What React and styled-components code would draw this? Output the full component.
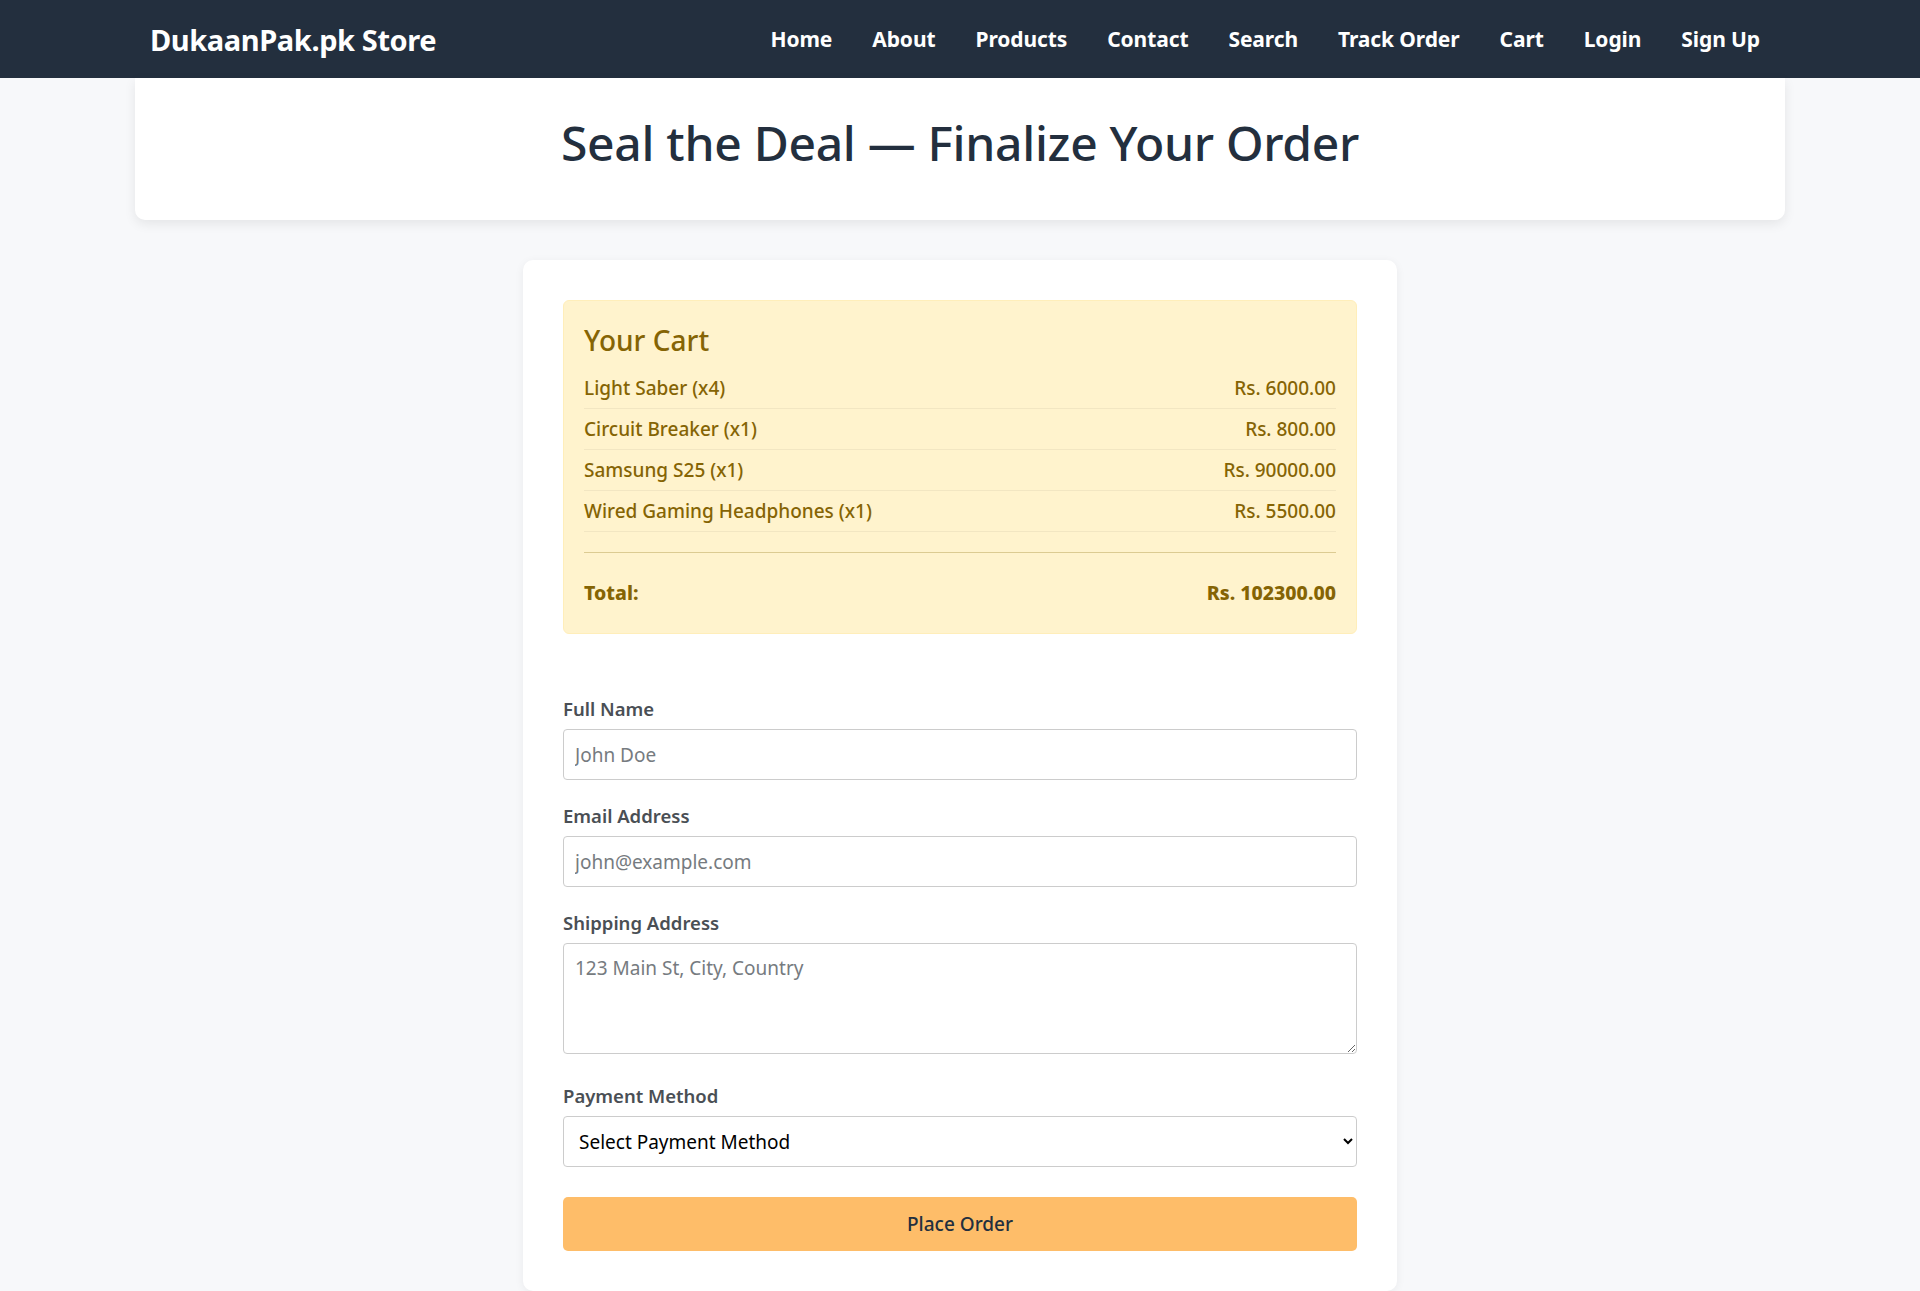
import React from 'react';
import styled, { createGlobalStyle } from 'styled-components';

const GlobalStyle = createGlobalStyle`
    * {
        box-sizing: border-box;
    }
    body {
        margin: 0;
        background: #f7f8fa;
        font-family: "Noto Sans", "Open Sans", Arial, sans-serif;
        color: #232f3e;
    }
`;

const Navbar = styled.nav`
    height: 78px;
    background: #232f3e;
    display: flex;
    align-items: center;
    justify-content: space-between;
    padding: 0 160px 0 150px;
`;

const Brand = styled.div`
    font-size: 29px;
    font-weight: 700;
    color: #ffffff;
    letter-spacing: -0.4px;
`;

const NavLinks = styled.div`
    display: flex;
    gap: 40px;
`;

const NavLink = styled.a`
    font-size: 21px;
    font-weight: 700;
    color: #ffffff;
    text-decoration: none;
    letter-spacing: -0.1px;
    cursor: pointer;
`;

const HeaderCard = styled.header`
    width: 1650px;
    margin: 0 auto;
    height: 142px;
    padding-bottom: 14px;
    background: #ffffff;
    border-radius: 0 0 10px 10px;
    box-shadow: 0 4px 12px rgba(0, 0, 0, 0.08);
    display: flex;
    align-items: center;
    justify-content: center;
`;

const PageTitle = styled.h1`
    margin: 0;
    font-size: 48px;
    font-weight: 500;
    color: #232f3e;
    letter-spacing: -0.3px;
`;

const CheckoutCard = styled.section`
    width: 874px;
    margin: 40px auto 0;
    background: #ffffff;
    border-radius: 10px;
    box-shadow: 0 2px 10px rgba(0, 0, 0, 0.06);
    padding: 40px;
`;

const CartBox = styled.div`
    background: #fff3cd;
    border: 1px solid #ffeeba;
    border-radius: 6px;
    padding: 22px 20px 20px;
    color: #856404;
    margin-bottom: 63px;
`;

const CartTitle = styled.h3`
    margin: 0 0 10px;
    font-size: 28px;
    font-weight: 500;
    line-height: 1.25;
`;

const CartRow = styled.div`
    display: flex;
    justify-content: space-between;
    align-items: center;
    padding: 8px 0;
    font-size: ${({ $total }) => ($total ? 19.5 : 19)}px;
    font-weight: ${({ $total }) => ($total ? 800 : 500)};
    line-height: 24px;
    border-bottom: ${({ $total }) => ($total ? 'none' : '1px solid rgba(0, 0, 0, 0.05)')};
`;

const Divider = styled.hr`
    border: none;
    border-top: 1px solid #dccb92;
    margin: 20px 0 20px;
`;

const Field = styled.div`
    margin-bottom: ${({ $gap }) => $gap}px;
`;

const Label = styled.label`
    display: block;
    font-size: 18.5px;
    font-weight: 600;
    color: #4a4f55;
    line-height: 24px;
    margin-bottom: 8px;
`;

const inputBase = `
    display: block;
    width: 100%;
    border: 1px solid #cccccc;
    border-radius: 4px;
    background: #ffffff;
    font-family: "Noto Sans", "Open Sans", Arial, sans-serif;
    font-size: 19px;
    color: #232f3e;
    outline: none;
    &::placeholder {
        color: #767b80;
    }
`;

const TextInput = styled.input`
    ${inputBase}
    height: 51px;
    padding: 0 11px;
`;

const TextArea = styled.textarea`
    ${inputBase}
    height: 111px;
    padding: 11px 11px;
    resize: vertical;
`;

const Select = styled.select`
    ${inputBase}
    height: 51px;
    padding: 0 11px;
    color: #000000;
`;

const SubmitButton = styled.button`
    display: block;
    width: 100%;
    height: 54px;
    border: none;
    border-radius: 5px;
    background: #febd69;
    color: #232f3e;
    font-family: "Noto Sans", "Open Sans", Arial, sans-serif;
    font-size: 19px;
    font-weight: 500;
    cursor: pointer;
`;

const links = ['Home', 'About', 'Products', 'Contact', 'Search', 'Track Order', 'Cart', 'Login', 'Sign Up'];

const cartItems = [
    { name: 'Light Saber', qty: 4, price: 6000 },
    { name: 'Circuit Breaker', qty: 1, price: 800 },
    { name: 'Samsung S25', qty: 1, price: 90000 },
    { name: 'Wired Gaming Headphones', qty: 1, price: 5500 },
];

const App = () => {
    const total = cartItems.reduce((sum, item) => sum + item.price, 0);

    return (
        <>
            <GlobalStyle />
            <Navbar>
                <Brand>DukaanPak.pk Store</Brand>
                <NavLinks>
                    {links.map((link) => (
                        <NavLink key={link}>{link}</NavLink>
                    ))}
                </NavLinks>
            </Navbar>
            <HeaderCard>
                <PageTitle>Seal the Deal — Finalize Your Order</PageTitle>
            </HeaderCard>
            <CheckoutCard>
                <CartBox>
                    <CartTitle>Your Cart</CartTitle>
                    {cartItems.map((item) => (
                        <CartRow key={item.name}>
                            <span>{item.name} (x{item.qty})</span>
                            <span>Rs. {item.price.toFixed(2)}</span>
                        </CartRow>
                    ))}
                    <Divider />
                    <CartRow $total>
                        <span>Total:</span>
                        <span>Rs. {total.toFixed(2)}</span>
                    </CartRow>
                </CartBox>
                <form onSubmit={(e) => e.preventDefault()}>
                    <Field $gap={24}>
                        <Label htmlFor="name">Full Name</Label>
                        <TextInput id="name" type="text" placeholder="John Doe" />
                    </Field>
                    <Field $gap={24}>
                        <Label htmlFor="email">Email Address</Label>
                        <TextInput id="email" type="email" placeholder="john@example.com" />
                    </Field>
                    <Field $gap={30}>
                        <Label htmlFor="address">Shipping Address</Label>
                        <TextArea id="address" placeholder="123 Main St, City, Country" />
                    </Field>
                    <Field $gap={30}>
                        <Label htmlFor="payment">Payment Method</Label>
                        <Select id="payment" defaultValue="">
                            <option value="">Select Payment Method</option>
                            <option value="cod">Cash on Delivery</option>
                            <option value="card">Credit / Debit Card</option>
                        </Select>
                    </Field>
                    <SubmitButton type="submit">Place Order</SubmitButton>
                </form>
            </CheckoutCard>
        </>
    );
};

export default App;
